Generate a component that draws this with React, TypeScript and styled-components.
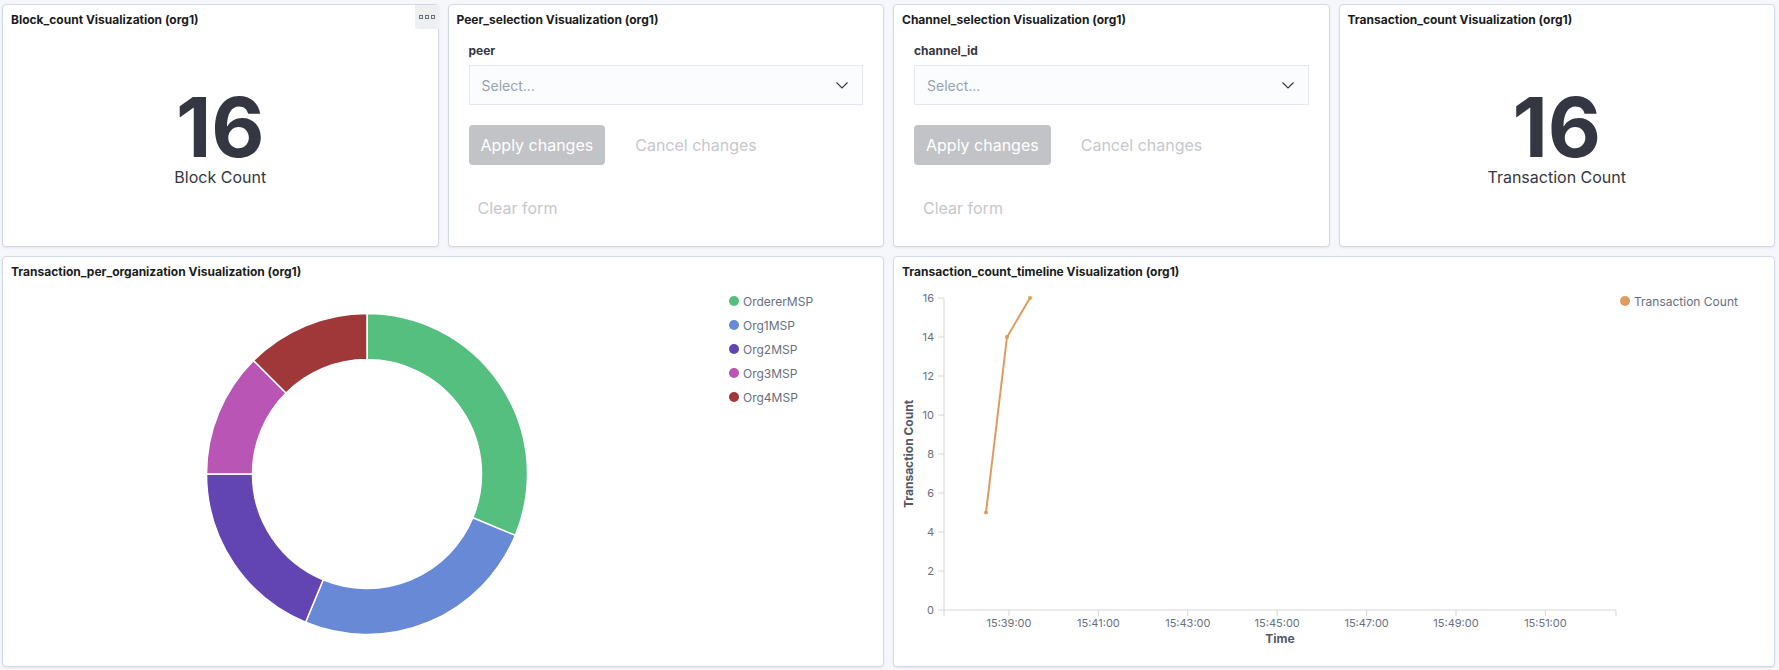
import * as React from "react";
import styled, { createGlobalStyle } from "styled-components";

const GlobalStyle = createGlobalStyle`
  html, body {
    margin: 0;
    padding: 0;
    background: #f5f7fa;
    font-family: Inter, "Noto Sans", "Liberation Sans", sans-serif;
    color: #343741;
  }
  * { box-sizing: border-box; }
`;

const Dashboard = styled.div`
  display: grid;
  grid-template-columns: repeat(4, 1fr);
  grid-template-rows: 243px 411px;
  gap: 9px;
  padding: 4px 4px 3px 2px;
  height: 670px;
`;

const Panel = styled.div<{ span?: number }>`
  position: relative;
  grid-column: span ${p => p.span || 1};
  display: flex;
  flex-direction: column;
  min-width: 0;
  padding: 7px 8px 8px;
  background: #fff;
  border: 1px solid #d3dae6;
  border-radius: 4px;
  box-shadow: 0 1px 2px rgba(152, 162, 179, 0.2);
`;

const Title = styled.div`
  font-size: 12px;
  line-height: 16px;
  font-weight: 700;
  color: #1a1c21;
  white-space: nowrap;
`;

const OptionsButton = styled.div`
  position: absolute;
  top: 0;
  right: -1px;
  width: 24px;
  height: 24px;
  display: flex;
  align-items: center;
  justify-content: center;
  gap: 2px;
  background: #eeeff1;
  border-radius: 0 4px 0 4px;
  span {
    width: 4px;
    height: 4px;
    border: 1px solid #69707d;
  }
`;

const MetricBody = styled.div`
  flex: 1;
  display: flex;
  flex-direction: column;
  align-items: center;
  justify-content: center;
  padding-top: 14px;
`;

const MetricValue = styled.div`
  font-size: 82px;
  line-height: 70px;
  font-weight: 700;
  color: #343741;
`;

const MetricLabel = styled.div`
  margin-top: 5px;
  font-size: 16px;
  line-height: 19px;
  color: #343741;
`;

const Form = styled.div`
  margin-top: 15px;
  padding: 0 12px;
`;

const FieldLabel = styled.div`
  font-size: 12px;
  line-height: 16px;
  font-weight: 700;
  color: #343741;
`;

const SelectBox = styled.div`
  margin-top: 6px;
  height: 40px;
  display: flex;
  align-items: center;
  justify-content: space-between;
  padding: 0 14px 0 12px;
  background: #fbfcfd;
  border: 1px solid #e3e7ee;
  font-size: 14px;
  color: #98a2b3;
`;

const ButtonRow = styled.div<{ gap?: number }>`
  display: flex;
  align-items: center;
  margin-top: ${p => p.gap || 20}px;
`;

const FillButton = styled.div`
  height: 40px;
  display: flex;
  align-items: center;
  padding: 0 12px;
  border-radius: 4px;
  background: #c2c3c6;
  color: #fff;
  font-size: 16px;
`;

const EmptyButton = styled.div<{ pad: number; offset?: number }>`
  height: 40px;
  display: flex;
  align-items: center;
  padding: 0 ${p => p.pad}px;
  margin-left: ${p => p.offset || 0}px;
  color: #c6c8cc;
  font-size: 16px;
`;

const ChartBody = styled.div`
  flex: 1;
  display: flex;
  min-height: 0;
`;

const ChartArea = styled.div`
  flex: 1;
  min-width: 0;
  svg {
    display: block;
    overflow: visible;
  }
`;

const Legend = styled.div`
  width: 146px;
  padding-top: 9px;
`;

const LegendItem = styled.div`
  height: 24px;
  display: flex;
  align-items: center;
  gap: 4px;
  font-size: 12px;
  color: #69707d;
  white-space: nowrap;
`;

const Dot = styled.span<{ color: string }>`
  width: 10px;
  height: 10px;
  border-radius: 50%;
  background: ${p => p.color};
`;

const Chevron = () => (
  <svg width="12" height="7" viewBox="0 0 12 7">
    <polyline points="0.5,0.5 6,6 11.5,0.5" fill="none" stroke="#343741" strokeWidth="1.1" />
  </svg>
);

const orgs = [
  { name: "OrdererMSP", value: 5, color: "#55bf7f" },
  { name: "Org1MSP", value: 4, color: "#6889d5" },
  { name: "Org2MSP", value: 3, color: "#6344b3" },
  { name: "Org3MSP", value: 2, color: "#b955b5" },
  { name: "Org4MSP", value: 2, color: "#a03738" }
];

const LINE_COLOR = "#e09c5e";

const polar = (cx: number, cy: number, r: number, a: number) => [
  cx + r * Math.sin(a),
  cy - r * Math.cos(a)
];

const Donut = () => {
  const cx = 356;
  const cy = 194;
  const R = 160.5;
  const r = 114.5;
  const total = orgs.reduce((s, o) => s + o.value, 0);
  let start = 0;
  return (
    <svg width="100%" height="100%">
      {orgs.map(o => {
        const end = start + (o.value / total) * Math.PI * 2;
        const large = end - start > Math.PI ? 1 : 0;
        const [x1, y1] = polar(cx, cy, R, start);
        const [x2, y2] = polar(cx, cy, R, end);
        const [x3, y3] = polar(cx, cy, r, end);
        const [x4, y4] = polar(cx, cy, r, start);
        const d = `M${x1},${y1} A${R},${R} 0 ${large} 1 ${x2},${y2} L${x3},${y3} A${r},${r} 0 ${large} 0 ${x4},${y4} Z`;
        start = end;
        return <path key={o.name} d={d} fill={o.color} stroke="#fff" strokeWidth="1.5" />;
      })}
    </svg>
  );
};

// plot coordinates, relative to the chart body origin
const X0 = 42;
const X1 = 714;
const Y0 = 330;
const PER_UNIT = 19.5;
const yFor = (v: number) => Y0 - v * PER_UNIT;
const xTicks = ["15:39:00", "15:41:00", "15:43:00", "15:45:00", "15:47:00", "15:49:00", "15:51:00"];
const points = [
  [84, 5],
  [105, 14],
  [128, 16]
];

const Timeline = () => (
  <svg width="100%" height="100%" fontFamily="Inter, sans-serif">
    <line x1={X0} y1={yFor(16)} x2={X0} y2={Y0 + 6} stroke="#d3d6db" />
    <line x1={X0} y1={Y0} x2={X1} y2={Y0} stroke="#d3d6db" />
    <line x1={X1} y1={Y0} x2={X1} y2={Y0 + 6} stroke="#d3d6db" />
    {[0, 2, 4, 6, 8, 10, 12, 14, 16].map(v => (
      <g key={v}>
        <line x1={X0 - 6} y1={yFor(v)} x2={X0} y2={yFor(v)} stroke="#d3d6db" />
        <text x={X0 - 10} y={yFor(v) + 4} fontSize="11" fill="#69707d" textAnchor="end">
          {v}
        </text>
      </g>
    ))}
    {xTicks.map((t, i) => {
      const x = 107 + i * 89.4;
      return (
        <g key={t}>
          <line x1={x} y1={Y0} x2={x} y2={Y0 + 6} stroke="#d3d6db" />
          <text x={x} y={Y0 + 17} fontSize="11" fill="#69707d" textAnchor="middle">
            {t}
          </text>
        </g>
      );
    })}
    <text x={(X0 + X1) / 2} y={Y0 + 33} fontSize="12" fontWeight="700" fill="#535966" textAnchor="middle">
      Time
    </text>
    <text
      x={0}
      y={0}
      fontSize="12"
      fontWeight="700"
      fill="#535966"
      textAnchor="middle"
      transform={`translate(11, ${(yFor(16) + Y0) / 2}) rotate(-90)`}>
      Transaction Count
    </text>
    <polyline
      points={points.map(([x, v]) => `${x},${yFor(v)}`).join(" ")}
      fill="none"
      stroke={LINE_COLOR}
      strokeWidth="2"
    />
    {points.map(([x, v]) => (
      <circle key={x} cx={x} cy={yFor(v)} r="2" fill={LINE_COLOR} />
    ))}
  </svg>
);

const Metric = ({ title, value, label, menu }: { title: string; value: number; label: string; menu?: boolean }) => (
  <Panel>
    <Title>{title}</Title>
    {menu && (
      <OptionsButton>
        <span />
        <span />
        <span />
      </OptionsButton>
    )}
    <MetricBody>
      <MetricValue>{value}</MetricValue>
      <MetricLabel>{label}</MetricLabel>
    </MetricBody>
  </Panel>
);

const Selection = ({ title, field }: { title: string; field: string }) => (
  <Panel>
    <Title>{title}</Title>
    <Form>
      <FieldLabel>{field}</FieldLabel>
      <SelectBox>
        <span>Select...</span>
        <Chevron />
      </SelectBox>
      <ButtonRow>
        <FillButton>Apply changes</FillButton>
        <EmptyButton pad={14} offset={16}>
          Cancel changes
        </EmptyButton>
      </ButtonRow>
      <ButtonRow gap={23}>
        <EmptyButton pad={9}>Clear form</EmptyButton>
      </ButtonRow>
    </Form>
  </Panel>
);

export default function App() {
  return (
    <>
      <GlobalStyle />
      <Dashboard>
        <Metric title="Block_count Visualization (org1)" value={16} label="Block Count" menu />
        <Selection title="Peer_selection Visualization (org1)" field="peer" />
        <Selection title="Channel_selection Visualization (org1)" field="channel_id" />
        <Metric title="Transaction_count Visualization (org1)" value={16} label="Transaction Count" />

        <Panel span={2}>
          <Title>Transaction_per_organization Visualization (org1)</Title>
          <ChartBody>
            <ChartArea>
              <Donut />
            </ChartArea>
            <Legend>
              {orgs.map(o => (
                <LegendItem key={o.name}>
                  <Dot color={o.color} />
                  {o.name}
                </LegendItem>
              ))}
            </Legend>
          </ChartBody>
        </Panel>

        <Panel span={2}>
          <Title>Transaction_count_timeline Visualization (org1)</Title>
          <ChartBody>
            <ChartArea>
              <Timeline />
            </ChartArea>
            <Legend>
              <LegendItem>
                <Dot color={LINE_COLOR} />
                Transaction Count
              </LegendItem>
            </Legend>
          </ChartBody>
        </Panel>
      </Dashboard>
    </>
  );
}
